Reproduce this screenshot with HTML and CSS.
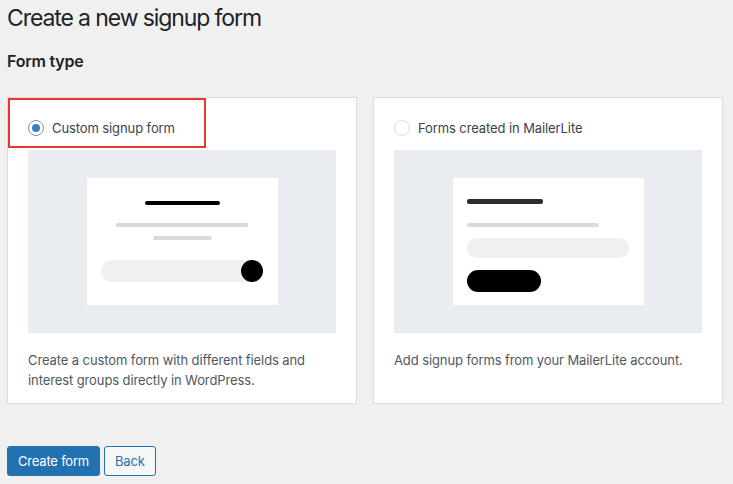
FILE: index.html
```html
<!DOCTYPE html>
<html lang="en">
<head>
    <meta charset="UTF-8">
    <meta name="viewport" content="width=device-width, initial-scale=1.0">
    <title>Create a new signup form</title>
    <link rel="stylesheet" href="styles.css">
</head>
<body>
    <div class="wrap">
        <h1>Create a new signup form</h1>
        <h2>Form type</h2>

        <div class="types">
            <label class="type-card">
                <span class="highlight"></span>
                <span class="type-head">
                    <span class="radio checked"></span>
                    Custom signup form
                </span>
                <span class="preview">
                    <span class="mock mock-custom">
                        <span class="bar bar-title"></span>
                        <span class="bar bar-long"></span>
                        <span class="bar bar-short"></span>
                        <span class="field">
                            <span class="dot"></span>
                        </span>
                    </span>
                </span>
                <span class="desc">Create a custom form with different fields and interest groups directly in WordPress.</span>
            </label>

            <label class="type-card">
                <span class="type-head">
                    <span class="radio"></span>
                    Forms created in MailerLite
                </span>
                <span class="preview">
                    <span class="mock mock-ml">
                        <span class="bar bar-title"></span>
                        <span class="bar bar-long"></span>
                        <span class="field"></span>
                        <span class="pill"></span>
                    </span>
                </span>
                <span class="desc">Add signup forms from your MailerLite account.</span>
            </label>
        </div>

        <div class="actions">
            <button class="button button-primary">Create form</button>
            <button class="button">Back</button>
        </div>
    </div>
</body>
</html>
```

FILE: styles.css
```css
body {
    margin: 0;
    background-color: #f0f0f1;
    color: #3c434a;
    font-family: Inter, "Liberation Sans", sans-serif;
    font-size: 13px;
    letter-spacing: -0.1px;
}
.wrap {
    padding: 3px 7px 0;
}
h1 {
    margin: 0;
    font-size: 23px;
    font-weight: 400;
    line-height: 30px;
    letter-spacing: -1.1px;
    color: #1d2327;
}
h2 {
    margin: 17px 0 0;
    font-size: 16px;
    font-weight: 600;
    line-height: 22px;
    letter-spacing: -0.2px;
    color: #1d2327;
}
.types {
    display: grid;
    grid-template-columns: 350px 350px;
    gap: 16px;
    margin-top: 25px;
}
.type-card {
    position: relative;
    display: flex;
    flex-direction: column;
    background-color: #fff;
    border: 1px solid #dcdcde;
    padding: 20px 20px 13px;
}
.highlight {
    position: absolute;
    left: 0;
    top: 0;
    width: 198px;
    height: 50px;
    box-sizing: border-box;
    border: 2px solid #e8382c;
}
.type-head {
    display: flex;
    align-items: center;
    gap: 8px;
    height: 20px;
}
.radio {
    width: 16px;
    height: 16px;
    box-sizing: border-box;
    border-radius: 50%;
    border: 1px solid #dcdcde;
    background-color: #fff;
    display: flex;
    align-items: center;
    justify-content: center;
}
.radio.checked {
    border-color: #8c8f94;
}
.radio.checked::before {
    content: "";
    width: 8px;
    height: 8px;
    border-radius: 50%;
    background-color: #3582c4;
}
.preview {
    margin-top: 12px;
    height: 183px;
    background-color: #e9ecf1;
    display: flex;
    align-items: center;
    justify-content: center;
}
.mock {
    width: 191px;
    height: 127px;
    background-color: #fff;
    box-sizing: border-box;
    display: flex;
    flex-direction: column;
}
.bar {
    display: block;
    height: 4px;
    border-radius: 2px;
    background-color: #d9dadc;
}
.mock-custom {
    align-items: center;
    padding-top: 23px;
}
.mock-custom .bar-title {
    width: 75px;
    background-color: #000;
}
.mock-custom .bar-long {
    width: 132px;
    margin-top: 18px;
}
.mock-custom .bar-short {
    width: 59px;
    margin-top: 9px;
}
.mock-custom .field {
    position: relative;
    width: 162px;
    height: 22px;
    margin-top: 20px;
    border-radius: 11px;
    background-color: #f0f0f0;
}
.dot {
    position: absolute;
    right: 0;
    top: 0;
    width: 22px;
    height: 22px;
    border-radius: 50%;
    background-color: #000;
}
.mock-ml {
    padding: 21px 14px 0;
}
.mock-ml .bar-title {
    width: 76px;
    height: 5px;
    background-color: #2c2d30;
}
.mock-ml .bar-long {
    width: 132px;
    margin-top: 19px;
}
.mock-ml .field {
    width: 162px;
    height: 20px;
    margin-top: 11px;
    border-radius: 10px;
    background-color: #f0f0f0;
}
.pill {
    width: 74px;
    height: 22px;
    margin-top: 12px;
    border-radius: 11px;
    background-color: #000;
}
.desc {
    margin-top: 17px;
    line-height: 20px;
    color: #50575e;
}
.actions {
    display: flex;
    gap: 4px;
    margin-top: 42px;
}
.button {
    height: 30px;
    padding: 0 10px;
    font-family: inherit;
    font-size: 13px;
    letter-spacing: -0.2px;
    border: 1px solid #2271b1;
    border-radius: 3px;
    background-color: #f6f7f7;
    color: #2271b1;
    cursor: pointer;
}
.button-primary {
    background-color: #2271b1;
    color: #fff;
}
```
